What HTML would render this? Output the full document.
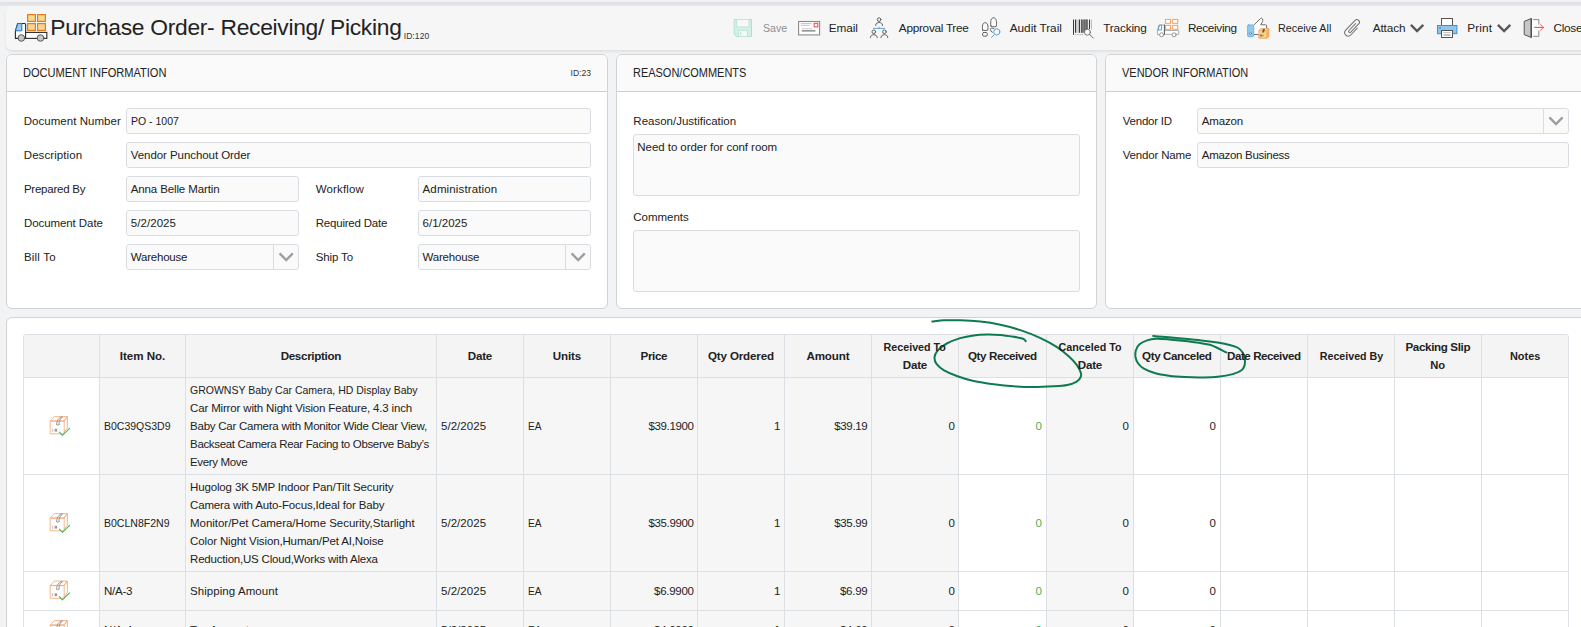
<!DOCTYPE html>
<html><head><meta charset="utf-8"><title>Purchase Order- Receiving/ Picking</title>
<style>
*{box-sizing:border-box}
html,body{margin:0;padding:0}
body{width:1581px;height:627px;overflow:hidden;position:relative;background:#f1f3f5;font-family:"Liberation Sans",sans-serif;}
.t{position:absolute;white-space:pre;font-family:"Liberation Sans",sans-serif}
.abs{position:absolute}
.topstrip{position:absolute;left:0;top:0;width:1581px;height:7px;background:linear-gradient(to bottom,#f1f2f4 0,#f1f2f4 1.9px,#e0e1e4 2.3px,#e4e5e8 5.4px,#f1f3f5 6.3px)}
.hdr{position:absolute;left:6px;top:6px;width:1620px;height:44px;background:#f6f6f6;border-radius:6px;box-shadow:0 2px 3px rgba(0,0,0,.066),0 1px 1px rgba(0,0,0,.016)}
.panel{position:absolute;background:#fff;border:1px solid #d2d2d2;border-radius:6px;overflow:hidden}
.phead{position:absolute;left:0;top:0;right:0;height:37px;background:#fafafa;border-bottom:1px solid #d0d0d0}
.inp{position:absolute;background:#fafafa;border:1px solid #d9dde1;border-radius:3px}
.dv{position:absolute;top:0;bottom:0;width:1px;background:#d9dde1}
.tbl{position:absolute;left:23px;top:334px;width:1546px;height:400px;border:1px solid #dcdfe3;border-radius:3px 3px 0 0;background:#fff;overflow:hidden}
.cell{position:absolute}
.hl{position:absolute;left:0;width:1546px;height:1px;background:#dcdfe3}
.vl{position:absolute;top:0;height:400px;width:1px;background:#dcdfe3}
svg.ov{position:absolute;left:0;top:0;width:1581px;height:627px;overflow:hidden}

</style></head>
<body>
<div class="topstrip"></div>
<div class="hdr"></div>
<div class="panel" style="left:6px;top:54px;width:602px;height:255px"><div class="phead"></div></div>
<div class="panel" style="left:616px;top:54px;width:481px;height:255px"><div class="phead"></div></div>
<div class="panel" style="left:1105px;top:54px;width:482px;height:255px"><div class="phead"></div></div>
<div class="panel" style="left:6px;top:317px;width:1581px;height:400px"></div>
<div class="inp" style="left:126px;top:108px;width:465px;height:26px"></div>
<div class="inp" style="left:126px;top:142px;width:465px;height:26px"></div>
<div class="inp" style="left:126px;top:176px;width:173px;height:26px"></div>
<div class="inp" style="left:418px;top:176px;width:173px;height:26px"></div>
<div class="inp" style="left:126px;top:210px;width:173px;height:26px"></div>
<div class="inp" style="left:418px;top:210px;width:173px;height:26px"></div>
<div class="inp" style="left:126px;top:244px;width:173px;height:26px"><div class="dv" style="left:146px"></div></div>
<div class="inp" style="left:418px;top:244px;width:173px;height:26px"><div class="dv" style="left:146px"></div></div>
<div class="inp" style="left:633px;top:134px;width:447px;height:62px"></div>
<div class="inp" style="left:633px;top:230px;width:447px;height:62px"></div>
<div class="inp" style="left:1197px;top:108px;width:372px;height:26px"><div class="dv" style="left:345px"></div></div>
<div class="inp" style="left:1197px;top:142px;width:372px;height:26px"></div>
<div class="tbl">
<div class="cell" style="left:0;top:0;width:1546px;height:42px;background:#f4f4f4"></div>
<div class="cell" style="left:76px;top:43px;width:85px;height:96px;background:#f6f6f6"></div>
<div class="cell" style="left:162px;top:43px;width:250px;height:96px;background:#f6f6f6"></div>
<div class="cell" style="left:413px;top:43px;width:86px;height:96px;background:#f6f6f6"></div>
<div class="cell" style="left:500px;top:43px;width:86px;height:96px;background:#f6f6f6"></div>
<div class="cell" style="left:587px;top:43px;width:86px;height:96px;background:#f6f6f6"></div>
<div class="cell" style="left:674px;top:43px;width:86px;height:96px;background:#f6f6f6"></div>
<div class="cell" style="left:761px;top:43px;width:86px;height:96px;background:#f6f6f6"></div>
<div class="cell" style="left:848px;top:43px;width:86px;height:96px;background:#f6f6f6"></div>
<div class="cell" style="left:1023px;top:43px;width:86px;height:96px;background:#f6f6f6"></div>
<div class="cell" style="left:76px;top:140px;width:85px;height:96px;background:#f6f6f6"></div>
<div class="cell" style="left:162px;top:140px;width:250px;height:96px;background:#f6f6f6"></div>
<div class="cell" style="left:413px;top:140px;width:86px;height:96px;background:#f6f6f6"></div>
<div class="cell" style="left:500px;top:140px;width:86px;height:96px;background:#f6f6f6"></div>
<div class="cell" style="left:587px;top:140px;width:86px;height:96px;background:#f6f6f6"></div>
<div class="cell" style="left:674px;top:140px;width:86px;height:96px;background:#f6f6f6"></div>
<div class="cell" style="left:761px;top:140px;width:86px;height:96px;background:#f6f6f6"></div>
<div class="cell" style="left:848px;top:140px;width:86px;height:96px;background:#f6f6f6"></div>
<div class="cell" style="left:1023px;top:140px;width:86px;height:96px;background:#f6f6f6"></div>
<div class="cell" style="left:76px;top:237px;width:85px;height:38px;background:#f6f6f6"></div>
<div class="cell" style="left:162px;top:237px;width:250px;height:38px;background:#f6f6f6"></div>
<div class="cell" style="left:413px;top:237px;width:86px;height:38px;background:#f6f6f6"></div>
<div class="cell" style="left:500px;top:237px;width:86px;height:38px;background:#f6f6f6"></div>
<div class="cell" style="left:587px;top:237px;width:86px;height:38px;background:#f6f6f6"></div>
<div class="cell" style="left:674px;top:237px;width:86px;height:38px;background:#f6f6f6"></div>
<div class="cell" style="left:761px;top:237px;width:86px;height:38px;background:#f6f6f6"></div>
<div class="cell" style="left:848px;top:237px;width:86px;height:38px;background:#f6f6f6"></div>
<div class="cell" style="left:1023px;top:237px;width:86px;height:38px;background:#f6f6f6"></div>
<div class="cell" style="left:76px;top:276px;width:85px;height:38px;background:#f6f6f6"></div>
<div class="cell" style="left:162px;top:276px;width:250px;height:38px;background:#f6f6f6"></div>
<div class="cell" style="left:413px;top:276px;width:86px;height:38px;background:#f6f6f6"></div>
<div class="cell" style="left:500px;top:276px;width:86px;height:38px;background:#f6f6f6"></div>
<div class="cell" style="left:587px;top:276px;width:86px;height:38px;background:#f6f6f6"></div>
<div class="cell" style="left:674px;top:276px;width:86px;height:38px;background:#f6f6f6"></div>
<div class="cell" style="left:761px;top:276px;width:86px;height:38px;background:#f6f6f6"></div>
<div class="cell" style="left:848px;top:276px;width:86px;height:38px;background:#f6f6f6"></div>
<div class="cell" style="left:1023px;top:276px;width:86px;height:38px;background:#f6f6f6"></div>
<div class="hl" style="top:42px"></div>
<div class="hl" style="top:139px"></div>
<div class="hl" style="top:236px"></div>
<div class="hl" style="top:275px"></div>
<div class="hl" style="top:314px"></div>
<div class="vl" style="left:75px"></div>
<div class="vl" style="left:161px"></div>
<div class="vl" style="left:412px"></div>
<div class="vl" style="left:499px"></div>
<div class="vl" style="left:586px"></div>
<div class="vl" style="left:673px"></div>
<div class="vl" style="left:760px"></div>
<div class="vl" style="left:847px"></div>
<div class="vl" style="left:934px"></div>
<div class="vl" style="left:1022px"></div>
<div class="vl" style="left:1109px"></div>
<div class="vl" style="left:1196px"></div>
<div class="vl" style="left:1283px"></div>
<div class="vl" style="left:1370px"></div>
<div class="vl" style="left:1457px"></div>
<div class="vl" style="left:1544px"></div>
</div>
<svg class="ov" viewBox="0 0 1581 627" fill="none" stroke-linecap="round" stroke-linejoin="round">
<g stroke-width="1">
<rect x="27.6" y="14.6" width="7.8" height="6.8" fill="#f7d98e" stroke="#e57a22" stroke-width="1.2" stroke-linejoin="miter"/>
<rect x="37.6" y="14.6" width="7.8" height="6.8" fill="#f7d98e" stroke="#e57a22" stroke-width="1.2" stroke-linejoin="miter"/>
<rect x="27.6" y="23.6" width="7.8" height="6.8" fill="#f7d98e" stroke="#e57a22" stroke-width="1.2" stroke-linejoin="miter"/>
<rect x="37.6" y="23.6" width="7.8" height="6.8" fill="#f7d98e" stroke="#e57a22" stroke-width="1.2" stroke-linejoin="miter"/>
<path d="M15.4 38.4 V30.8 L17.7 23.5 H24.6 Q25.6 23.5 25.6 24.5 V38.4 Z" fill="#fff" stroke="#2a2a2a" stroke-width="1.1"/>
<path d="M15.6 30.4 L17.8 23.6 H21.8 V30.4 Z" fill="#9ccdf0" stroke="#1f6fb5" stroke-width="1"/>
<rect x="25.6" y="32.4" width="21.2" height="6" fill="#fff" stroke="#2a2a2a" stroke-width="1.1" stroke-linejoin="miter"/>
<circle cx="21.4" cy="38" r="3.3" fill="#c6c6c6" stroke="#5a5a5a"/>
<circle cx="40.5" cy="38" r="3.3" fill="#c6c6c6" stroke="#5a5a5a"/>
</g>
<g stroke="#aee0cf" stroke-width="1">
<path d="M734.5 19.5 H751.5 V36.5 H736.5 L734.5 34.5 Z" fill="#d4efe6"/>
<rect x="737" y="19.5" width="12" height="7.5" fill="#f8f8f8" stroke="#bfe6d8"/>
<rect x="739" y="30.5" width="8.5" height="6" fill="#f8f8f8" stroke="#bfe6d8"/>
<path d="M740.8 32.5 V34.8" stroke="#aee0cf"/>
</g>
<rect x="798.6" y="21.5" width="21" height="13.4" fill="#fff" stroke="#8a8a8a" stroke-width="1.1" stroke-linejoin="miter"/>
<rect x="814.2" y="23.3" width="3.6" height="3.6" fill="#fff" stroke="#e8474c" stroke-width="1" stroke-linejoin="miter"/>
<path d="M801.2 23.7 H811" stroke="#aaa" stroke-width=".8"/><path d="M801.2 25.5 H809" stroke="#c4c4c4" stroke-width=".8"/>
<path d="M802.2 28.8 H812" stroke="#bbb" stroke-width=".8"/><path d="M802.2 30.9 H815" stroke="#777" stroke-width="1.1"/>
<g stroke="#5f5f5f" stroke-width="1">
<circle cx="879.1" cy="19.6" r="1.8"/>
<path d="M875.8 25.9 V25.0 C875.8 21.7 882.4 21.7 882.4 25.0 V25.9" stroke-linecap="butt"/>
<circle cx="873.8" cy="31.8" r="1.8"/>
<path d="M870.5 38.1 V37.2 C870.5 33.9 877.1 33.9 877.1 37.2 V38.1" stroke-linecap="butt"/>
<circle cx="884.4" cy="31.8" r="1.8"/>
<path d="M881.1 38.1 V37.2 C881.1 33.9 887.7 33.9 887.7 37.2 V38.1" stroke-linecap="butt"/>
</g>
<path d="M873 28.4 H885 M879.1 26.8 V28.4" stroke="#3b8fd6" stroke-width=".8" stroke-linecap="butt"/>
<g stroke="#5e5e5e" stroke-width=".95" fill="#fbfbfb">
<path d="M982.7 30.2 C981.9 26 982.6 22.7 985.1 22.7 C987.7 22.7 988.5 26 987.7 30.2 Q985.2 31 982.7 30.2 Z"/>
<rect x="982.6" y="32.5" width="4.7" height="3.7" rx="1.2"/>
<path d="M990.9 26 C990.2 21.6 991 17.7 993.6 17.7 C996.2 17.7 997 21.8 996.3 26.4 L994.8 26.8 Q992.6 26.8 990.9 26 Z"/>
<path d="M994 28.6 L991.6 27.8 L990.3 29.4 L991 31.2 L992.4 32.2" fill="none"/>
</g>
<circle cx="996.8" cy="31.9" r="3.1" fill="#f9f9f9" stroke="#4aa3e0" stroke-width=".95"/>
<path d="M994.6 34.3 L991.2 37.7" stroke="#4aa3e0" stroke-width="1" stroke-linecap="butt"/>
<g stroke-linecap="butt">
<path d="M1073.5 19.5 V34.8" stroke="#3a3a3a" stroke-width="1"/>
<path d="M1075.6 19.5 V32.8" stroke="#3a3a3a" stroke-width="1.3"/>
<path d="M1077.4 19.5 V32.8" stroke="#b5b5b5" stroke-width=".6"/>
<path d="M1079.4 19.5 V32.8" stroke="#3a3a3a" stroke-width="1.3"/>
<rect x="1080.9" y="19.5" width="6.7" height="13.3" fill="#7d7d7d" stroke="none"/>
<path d="M1081.6 19.5 V32.8" stroke="#5a5a5a" stroke-width="1"/>
<path d="M1084.6 19.5 V32.8" stroke="#666" stroke-width=".9"/>
<path d="M1087 19.5 V32.8" stroke="#555" stroke-width="1.2"/>
<path d="M1089.5 19.5 V29" stroke="#3a3a3a" stroke-width="1.1"/>
<path d="M1091.5 19.5 V29.6" stroke="#a5a5a5" stroke-width=".7"/>
<path d="M1075.2 34.5 H1083.4" stroke="#8a8a8a" stroke-width=".7" stroke-dasharray="1.2 1"/>
</g>
<circle cx="1087.4" cy="32.2" r="3" fill="#fcfcfc" stroke="#666" stroke-width=".9"/>
<path d="M1089.7 34.5 L1093.4 38.2" stroke="#666" stroke-width="1"/>
<rect x="1165.4" y="19.4" width="5.1" height="3.9" fill="#fff" stroke="#f0a264" stroke-width="1" stroke-linejoin="miter"/>
<rect x="1172.6" y="19.4" width="5.1" height="3.9" fill="#fff" stroke="#f0a264" stroke-width="1" stroke-linejoin="miter"/>
<rect x="1165.4" y="25.4" width="5.1" height="3.9" fill="#fff" stroke="#f0a264" stroke-width="1" stroke-linejoin="miter"/>
<rect x="1172.6" y="25.4" width="5.1" height="3.9" fill="#fff" stroke="#f0a264" stroke-width="1" stroke-linejoin="miter"/>
<path d="M1157.6 34.3 V30.2 L1159 25 H1164.3 V34.3 Z" fill="#fff" stroke="#a0a0a0" stroke-width=".9"/>
<path d="M1158.2 29.6 L1159.5 25.2 H1161.6 V29.6 Z" fill="#fff" stroke="#3f93d6" stroke-width=".9"/>
<rect x="1164.9" y="30.5" width="13.8" height="3.8" fill="#fff" stroke="#a8a8a8" stroke-width=".9"/>
<path d="M1164.5 24.6 V34.4" stroke="#5f5f5f" stroke-width="1" stroke-linecap="butt"/>
<circle cx="1161.6" cy="34.8" r="2" fill="#fff" stroke="#8a8a8a" stroke-width=".9"/>
<circle cx="1174.1" cy="34.8" r="2" fill="#fff" stroke="#8a8a8a" stroke-width=".9"/>
<path d="M1253.9 25 L1260.5 18.5 Q1261.6 17.5 1262.5 18.9 Q1263.2 20.4 1262.4 21.8 L1260.7 24.8 H1265.6 Q1266.6 24.8 1266.6 25.8 V34.5 H1253.9 Z" fill="#fff" stroke="none"/>
<path d="M1253.9 25 L1260.5 18.5 Q1261.6 17.5 1262.5 18.9 Q1263.2 20.4 1262.4 21.8 L1260.7 24.8 H1265.6 Q1266.6 24.8 1266.6 25.8 V28.6 M1253.9 34.5 H1258.4" stroke="#6e6e6e" stroke-width="1"/>
<rect x="1247.6" y="24.9" width="6.1" height="11.8" rx="1" fill="#92c9ef" stroke="#62abe2" stroke-width=".8"/>
<circle cx="1250.5" cy="33.4" r="1.05" fill="#fff" stroke="#3b6e9e" stroke-width=".7"/>
<path d="M1259.2 30.3 L1261 28.7 H1268.7 V36.7 L1266.9 38.2 H1259.2 Z" fill="#f9d48b" stroke="#f0a455" stroke-width=".9"/>
<path d="M1266.9 30.3 L1268.7 28.7 V36.7 L1266.9 38.2 Z" fill="#f6b56a" stroke="#f0a455" stroke-width=".6"/>
<path d="M1259.2 30.3 L1261 28.7 H1268.7 L1266.9 30.3 Z" fill="#fbe3a8" stroke="#f0a455" stroke-width=".6"/>
<path d="M1262.9 28.9 H1264.9 L1264.1 32.6 H1262.1 Z" fill="#5a5a5a" stroke="none"/>
<path d="M1260.3 34.4 V36.6 M1261.6 34.4 V36.6 M1260.3 35.5 H1261.6 M1262.4 34.8 L1263.4 35.5 L1262.4 36.2" stroke="#5e5138" stroke-width=".6" stroke-linecap="butt"/>
<g transform="translate(1352.8,27.8) rotate(-46)"><path d="M2.8 3.5 L-6.6 3.5 A3.5 3.5 0 0 1 -6.6 -3.5 L6.9 -3.5 A2.55 2.55 0 0 1 6.9 1.6 L-4.6 1.6 A1.25 1.25 0 0 1 -4.6 -0.9 L5 -0.9" stroke="#707070" stroke-width="1"/></g>
<path d="M1410.9 24.8 L1417.1 31 L1423.3 24.8" stroke="#585858" stroke-width="2.4" stroke-linecap="butt" stroke-linejoin="miter"/>
<path d="M1497.9 24.8 L1504.1 31 L1510.3 24.8" stroke="#585858" stroke-width="2.4" stroke-linecap="butt" stroke-linejoin="miter"/>
<rect x="1441.5" y="18.5" width="11" height="7" fill="#fff" stroke="#555" stroke-width="1" stroke-linejoin="miter"/>
<rect x="1437.5" y="25.5" width="19.4" height="8.2" fill="#90c6ee" stroke="#3f8fd6" stroke-width="1" stroke-linejoin="miter"/>
<rect x="1441.5" y="30.5" width="11" height="7" fill="#fff" stroke="#555" stroke-width="1" stroke-linejoin="miter"/>
<path d="M1443.5 32.5 H1450.5" stroke="#c4c4c4" stroke-width="1" stroke-linecap="butt"/><path d="M1443.5 35 H1450.5" stroke="#999" stroke-width="1.2" stroke-linecap="butt"/>
<rect x="1439.4" y="27.2" width="1.3" height="1.3" fill="#1f6fc0" stroke="none"/>
<rect x="1531.4" y="19.6" width="7.4" height="16.7" fill="#fdfdfd" stroke="none"/>
<path d="M1533.2 19.6 H1538.8 V24.6 M1538.8 30.6 V36.3 H1533.2" stroke="#8a8a8a" stroke-width="1" stroke-linecap="butt" stroke-linejoin="miter"/>
<path d="M1524.6 21.2 L1531.2 18.6 V37.4 L1524.6 34.8 Z" fill="#c9c8c7" stroke="#555" stroke-width="1" stroke-linejoin="miter"/>
<path d="M1531.3 18.2 V37.8" stroke="#505050" stroke-width="1.3" stroke-linecap="butt"/>
<path d="M1534.2 27.4 H1543.6" stroke="#f0525a" stroke-width="1.1" stroke-linecap="butt"/><path d="M1540.6 24.7 L1543.6 27.4 L1540.6 30.2" stroke="#f0525a" stroke-width=".9"/>
<path d="M279.6 253.4 L286.2 260.0 L292.8 253.4" stroke="#9e9e9e" stroke-width="2.4" stroke-linecap="butt" stroke-linejoin="miter"/>
<path d="M571.6 253.4 L578.2 260.0 L584.8 253.4" stroke="#9e9e9e" stroke-width="2.4" stroke-linecap="butt" stroke-linejoin="miter"/>
<path d="M1549.4 117.4 L1556.0 124.0 L1562.6 117.4" stroke="#9e9e9e" stroke-width="2.4" stroke-linecap="butt" stroke-linejoin="miter"/>
<g transform="translate(50,416)">
<path d="M0.6 4.9 L4.3 0.6 H17.4 L14.2 4.9 Z M0.6 4.9 H14.2 V17.8 H0.6 Z M14.2 4.9 L17.4 0.6 V12 L14.2 16" stroke="#f5ad7d" stroke-width=".9" fill="#fff"/>
<path d="M11.4 0.8 C8.5 2 6.6 4.6 6.6 8.6 M12.6 1 C10 2.4 9 5 9 8.6 M6.6 8.6 C7 9.6 8.6 9.6 9 8.6" stroke="#8d8d8d" stroke-width=".9"/>
<path d="M2.6 13 V15.6" stroke="#aaa" stroke-width=".7"/><rect x="4.6" y="12.8" width="2.6" height="2.8" fill="#9a9a9a" stroke="none"/>
<path d="M9.4 16.2 L12.4 19.4 L19.6 12.4" stroke="#3dbb61" stroke-width="1.1"/>
</g>
<g transform="translate(50,513)">
<path d="M0.6 4.9 L4.3 0.6 H17.4 L14.2 4.9 Z M0.6 4.9 H14.2 V17.8 H0.6 Z M14.2 4.9 L17.4 0.6 V12 L14.2 16" stroke="#f5ad7d" stroke-width=".9" fill="#fff"/>
<path d="M11.4 0.8 C8.5 2 6.6 4.6 6.6 8.6 M12.6 1 C10 2.4 9 5 9 8.6 M6.6 8.6 C7 9.6 8.6 9.6 9 8.6" stroke="#8d8d8d" stroke-width=".9"/>
<path d="M2.6 13 V15.6" stroke="#aaa" stroke-width=".7"/><rect x="4.6" y="12.8" width="2.6" height="2.8" fill="#9a9a9a" stroke="none"/>
<path d="M9.4 16.2 L12.4 19.4 L19.6 12.4" stroke="#3dbb61" stroke-width="1.1"/>
</g>
<g transform="translate(50,580.5)">
<path d="M0.6 4.9 L4.3 0.6 H17.4 L14.2 4.9 Z M0.6 4.9 H14.2 V17.8 H0.6 Z M14.2 4.9 L17.4 0.6 V12 L14.2 16" stroke="#f5ad7d" stroke-width=".9" fill="#fff"/>
<path d="M11.4 0.8 C8.5 2 6.6 4.6 6.6 8.6 M12.6 1 C10 2.4 9 5 9 8.6 M6.6 8.6 C7 9.6 8.6 9.6 9 8.6" stroke="#8d8d8d" stroke-width=".9"/>
<path d="M2.6 13 V15.6" stroke="#aaa" stroke-width=".7"/><rect x="4.6" y="12.8" width="2.6" height="2.8" fill="#9a9a9a" stroke="none"/>
<path d="M9.4 16.2 L12.4 19.4 L19.6 12.4" stroke="#3dbb61" stroke-width="1.1"/>
</g>
<g transform="translate(50,620)">
<path d="M0.6 4.9 L4.3 0.6 H17.4 L14.2 4.9 Z M0.6 4.9 H14.2 V17.8 H0.6 Z M14.2 4.9 L17.4 0.6 V12 L14.2 16" stroke="#f5ad7d" stroke-width=".9" fill="#fff"/>
<path d="M11.4 0.8 C8.5 2 6.6 4.6 6.6 8.6 M12.6 1 C10 2.4 9 5 9 8.6 M6.6 8.6 C7 9.6 8.6 9.6 9 8.6" stroke="#8d8d8d" stroke-width=".9"/>
<path d="M2.6 13 V15.6" stroke="#aaa" stroke-width=".7"/><rect x="4.6" y="12.8" width="2.6" height="2.8" fill="#9a9a9a" stroke="none"/>
<path d="M9.4 16.2 L12.4 19.4 L19.6 12.4" stroke="#3dbb61" stroke-width="1.1"/>
</g>
<path d="M1025.8 341.2 C1025.3 340.8 1025.1 339.5 1023.1 338.8 C1021.1 338.1 1017.5 337.4 1013.7 336.8 C1009.9 336.2 1004.9 335.4 1000.4 335.0 C995.9 334.6 991.5 334.4 987.0 334.5 C982.5 334.6 978.1 334.8 973.6 335.4 C969.1 336.0 964.7 336.8 960.2 338.1 C955.7 339.5 950.6 341.4 946.8 343.5 C943.0 345.6 939.4 348.5 937.4 350.8 C935.4 353.1 934.6 355.3 934.5 357.5 C934.4 359.7 935.1 362.1 936.7 364.2 C938.3 366.3 940.6 368.3 944.1 370.3 C947.6 372.3 952.6 374.5 957.5 376.3 C962.4 378.1 967.6 379.7 973.6 381.0 C979.6 382.3 987.0 383.4 993.7 384.3 C1000.4 385.2 1007.0 385.9 1013.7 386.3 C1020.4 386.8 1027.1 387.0 1033.8 387.0 C1040.5 387.0 1048.3 386.6 1053.9 386.3 C1059.5 386.0 1063.5 385.8 1067.3 385.0 C1071.1 384.2 1074.5 382.9 1076.7 381.6 C1078.9 380.3 1080.0 378.6 1080.7 377.0 C1081.4 375.4 1081.4 374.3 1080.7 372.3 C1080.0 370.3 1078.7 367.6 1076.7 364.9 C1074.7 362.2 1072.1 359.2 1068.7 356.2 C1065.3 353.2 1061.3 349.8 1056.6 346.8 C1051.9 343.8 1046.5 340.9 1040.5 338.1 C1034.5 335.3 1027.1 332.3 1020.4 330.1 C1013.7 327.9 1007.1 326.1 1000.4 324.7 C993.7 323.3 987.0 322.3 980.3 321.6 C973.6 320.9 966.2 320.5 960.2 320.3 C954.2 320.1 948.8 320.1 944.1 320.3 C939.5 320.5 934.3 321.4 932.3 321.6" stroke="#0d7a50" stroke-width="2"/>
<path d="M1153.1 335.9 C1155.7 336.1 1163.5 336.7 1168.8 337.2 C1174.1 337.7 1179.7 338.3 1185.1 338.8 C1190.5 339.3 1195.9 339.8 1201.3 340.4 C1206.7 341.0 1212.7 341.8 1217.6 342.6 C1222.5 343.4 1227.2 344.4 1230.6 345.3 C1234.0 346.2 1236.2 346.8 1238.2 348.0 C1240.2 349.2 1241.5 350.6 1242.6 352.4 C1243.7 354.2 1244.5 356.7 1244.8 358.9 C1245.1 361.1 1245.1 363.5 1244.6 365.4 C1244.0 367.3 1243.5 368.9 1241.5 370.3 C1239.5 371.8 1236.8 373.0 1232.8 374.1 C1228.8 375.2 1222.8 376.2 1217.6 376.8 C1212.3 377.4 1206.7 377.4 1201.3 377.5 C1195.9 377.6 1190.5 377.4 1185.1 377.1 C1179.7 376.8 1173.9 376.4 1168.8 375.7 C1163.7 375.0 1158.8 374.2 1154.7 373.0 C1150.6 371.8 1146.7 370.2 1143.9 368.6 C1141.1 367.0 1139.4 365.2 1138.0 363.2 C1136.6 361.2 1135.8 358.9 1135.4 356.7 C1135.1 354.5 1135.2 352.3 1135.9 350.2 C1136.6 348.1 1137.6 345.8 1139.5 344.2 C1141.4 342.6 1144.4 341.3 1147.1 340.4 C1149.8 339.5 1152.2 339.0 1155.8 338.8 C1159.4 338.6 1163.9 339.0 1168.8 339.4 C1173.7 339.8 1179.7 340.4 1185.1 341.0 C1190.5 341.6 1197.1 342.6 1201.3 343.2 C1205.5 343.8 1207.3 344.0 1210.0 344.8 C1212.7 345.6 1214.9 346.7 1217.6 348.0 C1220.3 349.3 1224.8 351.7 1226.3 352.4" stroke="#0d7a50" stroke-width="2"/>
</svg>
<!-- text -->
<span class="t" style="left:50.26px;top:13.20px;line-height:28px;color:#222;font-size:22.8px;font-weight:normal;letter-spacing:-0.289px;">Purchase Order- Receiving/ Picking</span>
<span class="t" style="left:403.68px;top:31.00px;line-height:10px;color:#333;font-size:8.5px;font-weight:normal;letter-spacing:0.098px;">ID:120</span>
<span class="t" style="left:763.09px;top:20.20px;line-height:16px;color:#8e8e8e;font-size:11.8px;font-weight:normal;letter-spacing:0.000px;transform:scaleX(0.8971);transform-origin:left center;">Save</span>
<span class="t" style="left:828.84px;top:20.20px;line-height:16px;color:#222222;font-size:11.8px;font-weight:normal;letter-spacing:-0.143px;">Email</span>
<span class="t" style="left:898.84px;top:20.20px;line-height:16px;color:#222222;font-size:11.8px;font-weight:normal;letter-spacing:-0.286px;">Approval Tree</span>
<span class="t" style="left:1009.74px;top:20.20px;line-height:16px;color:#222222;font-size:11.8px;font-weight:normal;letter-spacing:-0.033px;">Audit Trail</span>
<span class="t" style="left:1103.14px;top:20.20px;line-height:16px;color:#222222;font-size:11.8px;font-weight:normal;letter-spacing:-0.155px;">Tracking</span>
<span class="t" style="left:1187.94px;top:20.20px;line-height:16px;color:#222222;font-size:11.8px;font-weight:normal;letter-spacing:-0.348px;">Receiving</span>
<span class="t" style="left:1278.28px;top:20.20px;line-height:16px;color:#222222;font-size:11.8px;font-weight:normal;letter-spacing:0.000px;transform:scaleX(0.9137);transform-origin:left center;">Receive All</span>
<span class="t" style="left:1372.74px;top:20.20px;line-height:16px;color:#222222;font-size:11.8px;font-weight:normal;letter-spacing:-0.145px;">Attach</span>
<span class="t" style="left:1467.24px;top:20.20px;line-height:16px;color:#222222;font-size:11.8px;font-weight:normal;letter-spacing:0.115px;">Print</span>
<span class="t" style="left:1553.44px;top:20.20px;line-height:16px;color:#222222;font-size:11.8px;font-weight:normal;letter-spacing:-0.261px;">Close</span>
<span class="t" style="left:23.27px;top:64.70px;line-height:16px;color:#222;font-size:12.5px;font-weight:normal;letter-spacing:0.000px;transform:scaleX(0.8855);transform-origin:left center;">DOCUMENT INFORMATION</span>
<span class="t" style="left:570.48px;top:68.00px;line-height:10px;color:#333;font-size:8.5px;font-weight:normal;letter-spacing:0.053px;">ID:23</span>
<span class="t" style="left:632.77px;top:64.70px;line-height:16px;color:#222;font-size:12.5px;font-weight:normal;letter-spacing:0.000px;transform:scaleX(0.8776);transform-origin:left center;">REASON/COMMENTS</span>
<span class="t" style="left:1121.97px;top:64.70px;line-height:16px;color:#222;font-size:12.5px;font-weight:normal;letter-spacing:0.000px;transform:scaleX(0.8791);transform-origin:left center;">VENDOR INFORMATION</span>
<span class="t" style="left:23.75px;top:113.00px;line-height:16px;color:#222222;font-size:11.5px;font-weight:normal;letter-spacing:0.035px;">Document Number</span>
<span class="t" style="left:23.75px;top:147.00px;line-height:16px;color:#222222;font-size:11.5px;font-weight:normal;letter-spacing:0.087px;">Description</span>
<span class="t" style="left:23.95px;top:181.00px;line-height:16px;color:#222222;font-size:11.5px;font-weight:normal;letter-spacing:-0.244px;">Prepared By</span>
<span class="t" style="left:23.95px;top:215.00px;line-height:16px;color:#222222;font-size:11.5px;font-weight:normal;letter-spacing:-0.076px;">Document Date</span>
<span class="t" style="left:23.95px;top:249.00px;line-height:16px;color:#222222;font-size:11.5px;font-weight:normal;letter-spacing:0.189px;">Bill To</span>
<span class="t" style="left:315.75px;top:181.00px;line-height:16px;color:#222222;font-size:11.5px;font-weight:normal;letter-spacing:0.146px;">Workflow</span>
<span class="t" style="left:315.75px;top:215.00px;line-height:16px;color:#222222;font-size:11.5px;font-weight:normal;letter-spacing:-0.213px;">Required Date</span>
<span class="t" style="left:315.75px;top:249.00px;line-height:16px;color:#222222;font-size:11.5px;font-weight:normal;letter-spacing:-0.143px;">Ship To</span>
<span class="t" style="left:130.79px;top:113.00px;line-height:16px;color:#222222;font-size:11.5px;font-weight:normal;letter-spacing:0.000px;transform:scaleX(0.9137);transform-origin:left center;">PO - 1007</span>
<span class="t" style="left:130.75px;top:147.00px;line-height:16px;color:#222222;font-size:11.5px;font-weight:normal;letter-spacing:-0.062px;">Vendor Punchout Order</span>
<span class="t" style="left:130.75px;top:181.00px;line-height:16px;color:#222222;font-size:11.5px;font-weight:normal;letter-spacing:-0.124px;">Anna Belle Martin</span>
<span class="t" style="left:130.75px;top:215.00px;line-height:16px;color:#222222;font-size:11.5px;font-weight:normal;letter-spacing:0.062px;">5/2/2025</span>
<span class="t" style="left:130.75px;top:249.00px;line-height:16px;color:#222222;font-size:11.5px;font-weight:normal;letter-spacing:-0.211px;">Warehouse</span>
<span class="t" style="left:422.55px;top:181.00px;line-height:16px;color:#222222;font-size:11.5px;font-weight:normal;letter-spacing:0.140px;">Administration</span>
<span class="t" style="left:422.55px;top:215.00px;line-height:16px;color:#222222;font-size:11.5px;font-weight:normal;letter-spacing:0.005px;">6/1/2025</span>
<span class="t" style="left:422.55px;top:249.00px;line-height:16px;color:#222222;font-size:11.5px;font-weight:normal;letter-spacing:-0.199px;">Warehouse</span>
<span class="t" style="left:633.35px;top:113.00px;line-height:16px;color:#222222;font-size:11.5px;font-weight:normal;letter-spacing:-0.006px;">Reason/Justification</span>
<span class="t" style="left:637.35px;top:139.20px;line-height:16px;color:#222222;font-size:11.5px;font-weight:normal;letter-spacing:-0.056px;">Need to order for conf room</span>
<span class="t" style="left:633.25px;top:209.00px;line-height:16px;color:#222222;font-size:11.5px;font-weight:normal;letter-spacing:-0.016px;">Comments</span>
<span class="t" style="left:1122.75px;top:113.00px;line-height:16px;color:#222222;font-size:11.5px;font-weight:normal;letter-spacing:-0.220px;">Vendor ID</span>
<span class="t" style="left:1122.75px;top:147.00px;line-height:16px;color:#222222;font-size:11.5px;font-weight:normal;letter-spacing:-0.173px;">Vendor Name</span>
<span class="t" style="left:1201.75px;top:113.00px;line-height:16px;color:#222222;font-size:11.5px;font-weight:normal;letter-spacing:-0.158px;">Amazon</span>
<span class="t" style="left:1201.75px;top:147.00px;line-height:16px;color:#222222;font-size:11.5px;font-weight:normal;letter-spacing:-0.289px;">Amazon Business</span>
<span class="t" style="left:119.70px;top:348.00px;line-height:16px;color:#222222;font-size:11.6px;font-weight:bold;letter-spacing:-0.020px;">Item No.</span>
<span class="t" style="left:280.70px;top:348.00px;line-height:16px;color:#222222;font-size:11.6px;font-weight:bold;letter-spacing:-0.317px;">Description</span>
<span class="t" style="left:467.70px;top:348.00px;line-height:16px;color:#222222;font-size:11.6px;font-weight:bold;letter-spacing:-0.177px;">Date</span>
<span class="t" style="left:552.80px;top:348.00px;line-height:16px;color:#222222;font-size:11.6px;font-weight:bold;letter-spacing:-0.144px;">Units</span>
<span class="t" style="left:640.50px;top:348.00px;line-height:16px;color:#222222;font-size:11.6px;font-weight:bold;letter-spacing:-0.342px;">Price</span>
<span class="t" style="left:708.00px;top:348.00px;line-height:16px;color:#222222;font-size:11.6px;font-weight:bold;letter-spacing:-0.165px;">Qty Ordered</span>
<span class="t" style="left:806.50px;top:348.00px;line-height:16px;color:#222222;font-size:11.6px;font-weight:bold;letter-spacing:-0.158px;">Amount</span>
<span class="t" style="left:881.27px;top:339.20px;line-height:16px;color:#222222;font-size:11.6px;font-weight:bold;letter-spacing:0.000px;transform:scaleX(0.9252);transform-origin:center center;">Received To</span>
<span class="t" style="left:902.70px;top:357.20px;line-height:16px;color:#222222;font-size:11.6px;font-weight:bold;letter-spacing:-0.177px;">Date</span>
<span class="t" style="left:968.00px;top:348.00px;line-height:16px;color:#222222;font-size:11.6px;font-weight:bold;letter-spacing:-0.405px;">Qty Received</span>
<span class="t" style="left:1055.96px;top:339.20px;line-height:16px;color:#222222;font-size:11.6px;font-weight:bold;letter-spacing:0.000px;transform:scaleX(0.9241);transform-origin:center center;">Canceled To</span>
<span class="t" style="left:1077.70px;top:357.20px;line-height:16px;color:#222222;font-size:11.6px;font-weight:bold;letter-spacing:-0.177px;">Date</span>
<span class="t" style="left:1142.10px;top:348.00px;line-height:16px;color:#222222;font-size:11.6px;font-weight:bold;letter-spacing:-0.391px;">Qty Canceled</span>
<span class="t" style="left:1227.00px;top:348.00px;line-height:16px;color:#222222;font-size:11.6px;font-weight:bold;letter-spacing:-0.438px;">Date Received</span>
<span class="t" style="left:1316.52px;top:348.00px;line-height:16px;color:#222222;font-size:11.6px;font-weight:bold;letter-spacing:0.000px;transform:scaleX(0.9208);transform-origin:center center;">Received By</span>
<span class="t" style="left:1405.50px;top:339.20px;line-height:16px;color:#222222;font-size:11.6px;font-weight:bold;letter-spacing:-0.359px;">Packing Slip</span>
<span class="t" style="left:1430.27px;top:357.20px;line-height:16px;color:#222222;font-size:11.6px;font-weight:bold;letter-spacing:0.000px;transform:scaleX(0.9637);transform-origin:center center;">No</span>
<span class="t" style="left:1508.89px;top:348.00px;line-height:16px;color:#222222;font-size:11.6px;font-weight:bold;letter-spacing:0.000px;transform:scaleX(0.9407);transform-origin:center center;">Notes</span>
<span class="t" style="left:104.09px;top:418.20px;line-height:16px;color:#222222;font-size:11.5px;font-weight:normal;letter-spacing:0.000px;transform:scaleX(0.9125);transform-origin:left center;">B0C39QS3D9</span>
<span class="t" style="left:440.95px;top:418.20px;line-height:16px;color:#222222;font-size:11.5px;font-weight:normal;letter-spacing:0.062px;">5/2/2025</span>
<span class="t" style="left:528.21px;top:418.20px;line-height:16px;color:#222222;font-size:11.5px;font-weight:normal;letter-spacing:0.000px;transform:scaleX(0.8798);transform-origin:left center;">EA</span>
<span class="t" style="left:648.50px;top:418.20px;line-height:16px;color:#222222;font-size:11.5px;font-weight:normal;letter-spacing:-0.367px;">$39.1900</span>
<span class="t" style="left:774.09px;top:418.20px;line-height:16px;color:#222222;font-size:11.5px;font-weight:normal;letter-spacing:0.000px;">1</span>
<span class="t" style="left:834.30px;top:418.20px;line-height:16px;color:#222222;font-size:11.5px;font-weight:normal;letter-spacing:-0.358px;">$39.19</span>
<span class="t" style="left:948.49px;top:418.20px;line-height:16px;color:#222222;font-size:11.5px;font-weight:normal;letter-spacing:0.000px;">0</span>
<span class="t" style="left:1035.49px;top:418.20px;line-height:16px;color:#4caf50;font-size:11.5px;font-weight:normal;letter-spacing:0.000px;">0</span>
<span class="t" style="left:1122.49px;top:418.20px;line-height:16px;color:#222222;font-size:11.5px;font-weight:normal;letter-spacing:0.000px;">0</span>
<span class="t" style="left:1209.49px;top:418.20px;line-height:16px;color:#222222;font-size:11.5px;font-weight:normal;letter-spacing:0.000px;">0</span>
<span class="t" style="left:104.09px;top:515.20px;line-height:16px;color:#222222;font-size:11.5px;font-weight:normal;letter-spacing:0.000px;transform:scaleX(0.9149);transform-origin:left center;">B0CLN8F2N9</span>
<span class="t" style="left:440.95px;top:515.20px;line-height:16px;color:#222222;font-size:11.5px;font-weight:normal;letter-spacing:0.062px;">5/2/2025</span>
<span class="t" style="left:528.21px;top:515.20px;line-height:16px;color:#222222;font-size:11.5px;font-weight:normal;letter-spacing:0.000px;transform:scaleX(0.8798);transform-origin:left center;">EA</span>
<span class="t" style="left:648.50px;top:515.20px;line-height:16px;color:#222222;font-size:11.5px;font-weight:normal;letter-spacing:-0.367px;">$35.9900</span>
<span class="t" style="left:774.09px;top:515.20px;line-height:16px;color:#222222;font-size:11.5px;font-weight:normal;letter-spacing:0.000px;">1</span>
<span class="t" style="left:834.30px;top:515.20px;line-height:16px;color:#222222;font-size:11.5px;font-weight:normal;letter-spacing:-0.358px;">$35.99</span>
<span class="t" style="left:948.49px;top:515.20px;line-height:16px;color:#222222;font-size:11.5px;font-weight:normal;letter-spacing:0.000px;">0</span>
<span class="t" style="left:1035.49px;top:515.20px;line-height:16px;color:#4caf50;font-size:11.5px;font-weight:normal;letter-spacing:0.000px;">0</span>
<span class="t" style="left:1122.49px;top:515.20px;line-height:16px;color:#222222;font-size:11.5px;font-weight:normal;letter-spacing:0.000px;">0</span>
<span class="t" style="left:1209.49px;top:515.20px;line-height:16px;color:#222222;font-size:11.5px;font-weight:normal;letter-spacing:0.000px;">0</span>
<span class="t" style="left:104.05px;top:582.80px;line-height:16px;color:#222222;font-size:11.5px;font-weight:normal;letter-spacing:-0.252px;">N/A-3</span>
<span class="t" style="left:440.95px;top:582.80px;line-height:16px;color:#222222;font-size:11.5px;font-weight:normal;letter-spacing:0.062px;">5/2/2025</span>
<span class="t" style="left:528.21px;top:582.80px;line-height:16px;color:#222222;font-size:11.5px;font-weight:normal;letter-spacing:0.000px;transform:scaleX(0.8798);transform-origin:left center;">EA</span>
<span class="t" style="left:654.10px;top:582.80px;line-height:16px;color:#222222;font-size:11.5px;font-weight:normal;letter-spacing:-0.296px;">$6.9900</span>
<span class="t" style="left:774.09px;top:582.80px;line-height:16px;color:#222222;font-size:11.5px;font-weight:normal;letter-spacing:0.000px;">1</span>
<span class="t" style="left:839.90px;top:582.80px;line-height:16px;color:#222222;font-size:11.5px;font-weight:normal;letter-spacing:-0.245px;">$6.99</span>
<span class="t" style="left:948.49px;top:582.80px;line-height:16px;color:#222222;font-size:11.5px;font-weight:normal;letter-spacing:0.000px;">0</span>
<span class="t" style="left:1035.49px;top:582.80px;line-height:16px;color:#4caf50;font-size:11.5px;font-weight:normal;letter-spacing:0.000px;">0</span>
<span class="t" style="left:1122.49px;top:582.80px;line-height:16px;color:#222222;font-size:11.5px;font-weight:normal;letter-spacing:0.000px;">0</span>
<span class="t" style="left:1209.49px;top:582.80px;line-height:16px;color:#222222;font-size:11.5px;font-weight:normal;letter-spacing:0.000px;">0</span>
<span class="t" style="left:104.05px;top:621.80px;line-height:16px;color:#222222;font-size:11.5px;font-weight:normal;letter-spacing:-0.252px;">N/A-4</span>
<span class="t" style="left:440.95px;top:621.80px;line-height:16px;color:#222222;font-size:11.5px;font-weight:normal;letter-spacing:0.062px;">5/2/2025</span>
<span class="t" style="left:528.21px;top:621.80px;line-height:16px;color:#222222;font-size:11.5px;font-weight:normal;letter-spacing:0.000px;transform:scaleX(0.8798);transform-origin:left center;">EA</span>
<span class="t" style="left:654.10px;top:621.80px;line-height:16px;color:#222222;font-size:11.5px;font-weight:normal;letter-spacing:-0.296px;">$4.6900</span>
<span class="t" style="left:774.09px;top:621.80px;line-height:16px;color:#222222;font-size:11.5px;font-weight:normal;letter-spacing:0.000px;">1</span>
<span class="t" style="left:839.90px;top:621.80px;line-height:16px;color:#222222;font-size:11.5px;font-weight:normal;letter-spacing:-0.245px;">$4.69</span>
<span class="t" style="left:948.49px;top:621.80px;line-height:16px;color:#222222;font-size:11.5px;font-weight:normal;letter-spacing:0.000px;">0</span>
<span class="t" style="left:1035.49px;top:621.80px;line-height:16px;color:#4caf50;font-size:11.5px;font-weight:normal;letter-spacing:0.000px;">0</span>
<span class="t" style="left:1122.49px;top:621.80px;line-height:16px;color:#222222;font-size:11.5px;font-weight:normal;letter-spacing:0.000px;">0</span>
<span class="t" style="left:1209.49px;top:621.80px;line-height:16px;color:#222222;font-size:11.5px;font-weight:normal;letter-spacing:0.000px;">0</span>
<span class="t" style="left:190.09px;top:382.20px;line-height:16px;color:#222222;font-size:11.5px;font-weight:normal;letter-spacing:0.000px;transform:scaleX(0.9139);transform-origin:left center;">GROWNSY Baby Car Camera, HD Display Baby</span>
<span class="t" style="left:190.05px;top:400.20px;line-height:16px;color:#222222;font-size:11.5px;font-weight:normal;letter-spacing:-0.159px;">Car Mirror with Night Vision Feature, 4.3 inch</span>
<span class="t" style="left:190.05px;top:418.20px;line-height:16px;color:#222222;font-size:11.5px;font-weight:normal;letter-spacing:-0.243px;">Baby Car Camera with Monitor Wide Clear View,</span>
<span class="t" style="left:190.05px;top:436.20px;line-height:16px;color:#222222;font-size:11.5px;font-weight:normal;letter-spacing:-0.338px;">Backseat Camera Rear Facing to Observe Baby’s</span>
<span class="t" style="left:190.05px;top:454.20px;line-height:16px;color:#222222;font-size:11.5px;font-weight:normal;letter-spacing:-0.347px;">Every Move</span>
<span class="t" style="left:190.05px;top:479.20px;line-height:16px;color:#222222;font-size:11.5px;font-weight:normal;letter-spacing:-0.146px;">Hugolog 3K 5MP Indoor Pan/Tilt Security</span>
<span class="t" style="left:190.05px;top:497.20px;line-height:16px;color:#222222;font-size:11.5px;font-weight:normal;letter-spacing:-0.158px;">Camera with Auto-Focus,Ideal for Baby</span>
<span class="t" style="left:190.05px;top:515.20px;line-height:16px;color:#222222;font-size:11.5px;font-weight:normal;letter-spacing:-0.035px;">Monitor/Pet Camera/Home Security,Starlight</span>
<span class="t" style="left:190.05px;top:533.20px;line-height:16px;color:#222222;font-size:11.5px;font-weight:normal;letter-spacing:-0.138px;">Color Night Vision,Human/Pet AI,Noise</span>
<span class="t" style="left:190.05px;top:551.20px;line-height:16px;color:#222222;font-size:11.5px;font-weight:normal;letter-spacing:-0.201px;">Reduction,US Cloud,Works with Alexa</span>
<span class="t" style="left:190.05px;top:582.80px;line-height:16px;color:#222222;font-size:11.5px;font-weight:normal;letter-spacing:0.060px;">Shipping Amount</span>
<span class="t" style="left:190.05px;top:621.80px;line-height:16px;color:#222222;font-size:11.5px;font-weight:normal;letter-spacing:-0.122px;">Tax Amount</span>
</body></html>
